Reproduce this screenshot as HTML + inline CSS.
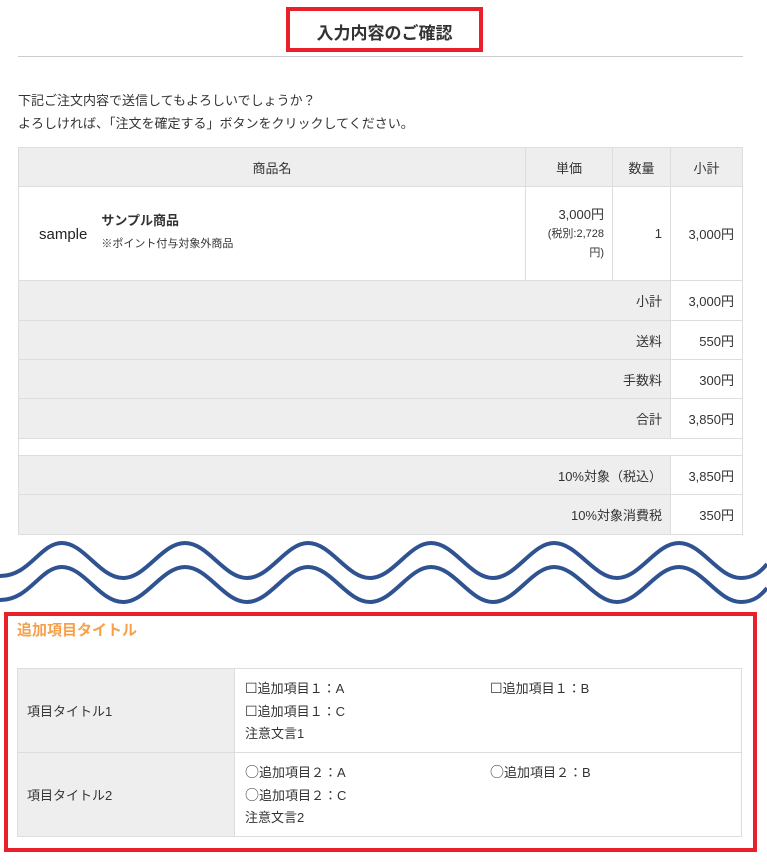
<!DOCTYPE html>
<html><head><meta charset="utf-8"><style>
*{box-sizing:border-box;margin:0;padding:0}
body{width:767px;height:865px;background:#fff;font-family:"Liberation Sans","Noto Sans CJK JP",sans-serif;color:#333;font-size:13px;position:relative;overflow:hidden}
.abs{position:absolute}
table{border-collapse:collapse;position:absolute}
td{border:1px solid #ddd}
.g{background:#eee}
.ic{font-family:"Noto Sans CJK JP",sans-serif;font-size:14px}
</style></head><body>
<div class="abs" style="left:286px;top:7px;width:197px;height:45px;border:4px solid #e8202a"></div>
<div class="abs" style="left:286px;top:19px;width:197px;text-align:center;font-size:17px;font-weight:bold;color:#333">入力内容のご確認</div>
<div class="abs" style="left:18px;top:56px;width:725px;height:1px;background:#ccc"></div>
<div class="abs" style="left:18px;top:89px;line-height:23px">下記ご注文内容で送信してもよろしいでしょうか？<br>よろしければ、「注文を確定する」ボタンをクリックしてください。</div>
<table style="left:18px;top:147px;width:725px">
<tr class="g" style="height:39px;text-align:center"><td style="width:507px">商品名</td><td style="width:87px">単価</td><td style="width:58px">数量</td><td>小計</td></tr>
<tr style="height:94px"><td><div style="display:flex;align-items:center;padding-left:20px"><span style="font-size:15px;color:#222;margin-right:14px;margin-top:2px">sample</span><div style="margin-top:-6px"><div style="font-weight:bold;margin-bottom:6px">サンプル商品</div><div style="font-size:11px">※ポイント付与対象外商品</div></div></div></td>
<td style="text-align:right;padding-right:8px;line-height:18px">3,000円<br><span style="font-size:11px">(税別:2,728<br>円)</span></td><td style="text-align:right;padding-right:8px">1</td><td style="text-align:right;padding-right:8px">3,000円</td></tr>
</table>
<table style="left:18px;top:280px;width:725px;text-align:right">
<tr style="height:40px"><td class="g" style="width:652px;padding-right:8px">小計</td><td style="padding-right:8px">3,000円</td></tr>
<tr style="height:39px"><td class="g" style="padding-right:8px">送料</td><td style="padding-right:8px">550円</td></tr>
<tr style="height:39px"><td class="g" style="padding-right:8px">手数料</td><td style="padding-right:8px">300円</td></tr>
<tr style="height:40px"><td class="g" style="padding-right:8px">合計</td><td style="padding-right:8px">3,850円</td></tr>
<tr style="height:17px"><td colspan="2"></td></tr>
<tr style="height:39px"><td class="g" style="padding-right:8px">10%対象（税込）</td><td style="padding-right:8px">3,850円</td></tr>
<tr style="height:40px"><td class="g" style="padding-right:8px">10%対象消費税</td><td style="padding-right:8px">350円</td></tr>
</table>
<svg class="abs" style="left:0;top:536px" width="767" height="74" viewBox="0 0 767 74">
<g fill="none" stroke="#2f5291" stroke-width="4">
<path d="M0,40 C30,40 40,7 62,7 C84,7 100,42 123,42 C146,42 162,7 185,7 C208,7 224,42 247,42 C270,42 286,7 308,7 C331,7 347,42 370,42 C393,42 409,7 431,7 C454,7 470,42 493,42 C516,42 532,7 554,7 C577,7 594,42 617,42 C640,42 656,7 679,7 C702,7 718,42 741,42 C755,42 762,34 767,28"/>
<path d="M0,64 C30,64 40,31 62,31 C84,31 100,66 123,66 C146,66 162,31 185,31 C208,31 224,66 247,66 C270,66 286,31 308,31 C331,31 347,66 370,66 C393,66 409,31 431,31 C454,31 470,66 493,66 C516,66 532,31 554,31 C577,31 594,66 617,66 C640,66 656,31 679,31 C702,31 718,66 741,66 C755,66 762,58 767,52"/>
</g></svg>
<div class="abs" style="left:4px;top:612px;width:753px;height:240px;border:4px solid #e8202a"></div>
<div class="abs" style="left:17px;top:619px;font-size:15px;font-weight:bold;color:#f7a04a">追加項目タイトル</div>
<table style="left:17px;top:668px;width:725px">
<tr style="height:84px"><td class="g" style="width:217px;padding-left:9px">項目タイトル1</td><td style="padding-left:10px;line-height:22px"><div style="display:flex"><span style="width:245px"><span class="ic">☐</span>追加項目１：A</span><span><span class="ic">☐</span>追加項目１：B</span></div><span class="ic">☐</span>追加項目１：C<br>注意文言1</td></tr>
<tr style="height:84px"><td class="g" style="padding-left:9px">項目タイトル2</td><td style="padding-left:10px;line-height:22px"><div style="display:flex"><span style="width:245px"><span class="ic">○</span>追加項目２：A</span><span><span class="ic">○</span>追加項目２：B</span></div><span class="ic">○</span>追加項目２：C<br>注意文言2</td></tr>
</table>
</body></html>
